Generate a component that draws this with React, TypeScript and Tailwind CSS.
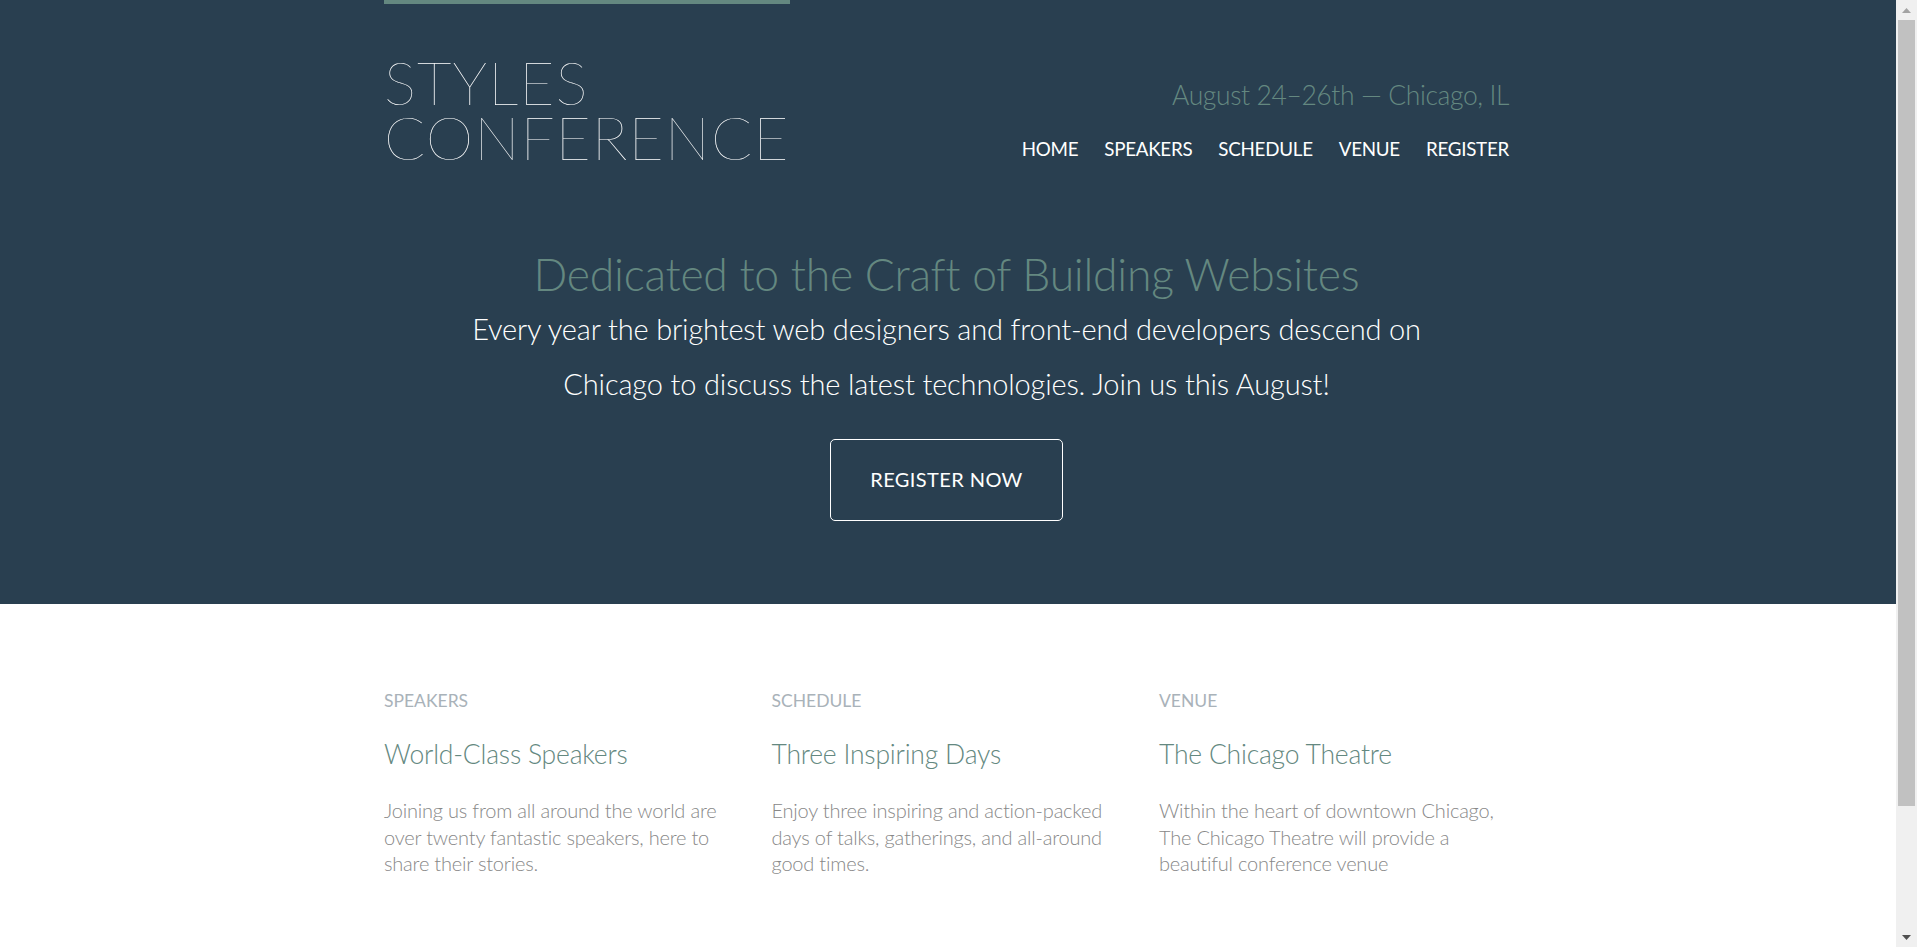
export default function App() {
  const navItems = ['HOME', 'SPEAKERS', 'SCHEDULE', 'VENUE', 'REGISTER'];

  const teasers = [
    {
      label: 'SPEAKERS',
      title: 'World-Class Speakers',
      body: 'Joining us from all around the world are over twenty fantastic speakers, here to share their stories.',
    },
    {
      label: 'SCHEDULE',
      title: 'Three Inspiring Days',
      body: 'Enjoy three inspiring and action-packed days of talks, gatherings, and all-around good times.',
    },
    {
      label: 'VENUE',
      title: 'The Chicago Theatre',
      body: 'Within the heart of downtown Chicago, The Chicago Theatre will provide a beautiful conference venue',
    },
  ];

  return (
    <div className="flex h-screen overflow-hidden bg-white font-['Lato','Open_Sans',sans-serif] text-[#888]">
      <main className="h-full flex-1 overflow-y-auto">
        {/* Header + hero share the dark band */}
        <div className="bg-[#293f50] pr-[3px]">
          <header className="mx-auto flex w-[1125px] items-start justify-between">
            <a
              href="#"
              className="inline-block border-t-4 border-[#648880] pt-[50px] pb-[28px] text-[60.5px] leading-[55px] font-thin tracking-[1px] text-white"
            >
              STYLES
              <br />
              CONFERENCE
            </a>
            <div className="flex flex-col items-end pt-[78px]">
              <h3 className="text-[26.5px] leading-[34px] font-light tracking-[-0.4px] text-[#648880]">
                August 24–26th — Chicago, IL
              </h3>
              <nav className="mt-[23px] flex gap-[26px]">
                {navItems.map((item) => (
                  <a
                    key={item}
                    href="#"
                    className="text-[18.75px] leading-[27.5px] font-normal tracking-[-0.25px] text-white"
                  >
                    {item}
                  </a>
                ))}
              </nav>
            </div>
          </header>

          <section className="mx-auto flex w-[1125px] flex-col items-center pt-[54px] pb-[83px] text-center">
            <h2 className="text-[44.5px] leading-[55px] font-light tracking-[-0.25px] text-[#648880]">
              Dedicated to the Craft of Building Websites
            </h2>
            <p className="max-w-[1000px] text-[29px] leading-[55px] font-light tracking-[-0.15px] text-white">
              Every year the brightest web designers and front-end developers descend on Chicago to discuss the latest
              technologies. Join us this August!
            </p>
            <a
              href="#"
              className="mt-[28px] rounded-[5px] border border-white px-[39px] py-[26.25px] text-[20px] leading-[27.5px] font-normal tracking-[0.4px] text-white"
            >
              REGISTER NOW
            </a>
          </section>
        </div>

        {/* Teasers */}
        <div className="pr-[3px]">
          <section className="mx-auto grid w-[1125px] grid-cols-3 gap-[37.5px] pt-[83px] pb-[83px]">
            {teasers.map((t) => (
              <div key={t.label}>
                <h5 className="text-[17.5px] leading-[27.5px] font-normal text-[#a9b2b9]">{t.label}</h5>
                <h3 className="mt-[26px] text-[26.5px] leading-[27.5px] font-light tracking-[-0.2px] text-[#648880]">
                  {t.title}
                </h3>
                <p className="mt-[29px] text-[20px] leading-[26.7px] font-light tracking-[-0.2px]">{t.body}</p>
              </div>
            ))}
          </section>
        </div>

        <footer className="bg-[#293f50] py-[55px] pr-[3px]">
          <div className="mx-auto flex w-[1125px] items-center justify-between text-[17.5px] text-[#888]">
            <small>© Styles Conference</small>
            <nav className="flex gap-[25px]">
              {navItems.map((item) => (
                <a key={item} href="#" className="text-[#888]">
                  {item}
                </a>
              ))}
            </nav>
          </div>
        </footer>
      </main>

      {/* Page scrollbar */}
      <div className="flex w-[21px] shrink-0 flex-col items-center bg-[#f0f0f0]">
        <div className="flex h-[20px] items-center justify-center">
          <svg width="9" height="5" viewBox="0 0 9 5">
            <path d="M4.5 0 L9 5 L0 5 Z" fill="#a3a3a3" />
          </svg>
        </div>
        <div className="h-[786px] w-[17px] bg-[#c1c1c1]" />
        <div className="flex-1" />
        <div className="flex h-[20px] items-center justify-center">
          <svg width="9" height="5" viewBox="0 0 9 5">
            <path d="M0 0 L9 0 L4.5 5 Z" fill="#505050" />
          </svg>
        </div>
      </div>
    </div>
  );
}
